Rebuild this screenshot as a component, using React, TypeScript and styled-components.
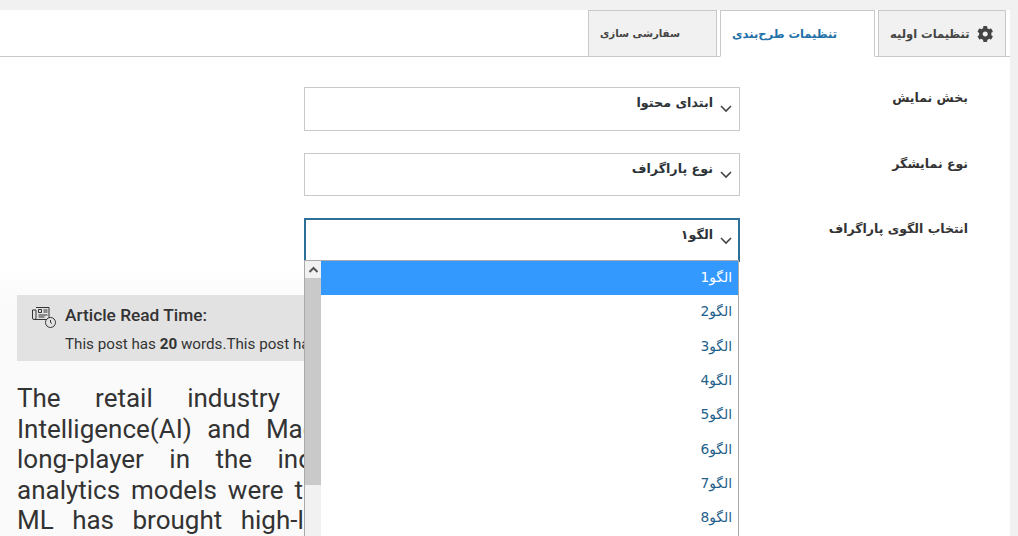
import { createGlobalStyle, styled } from "styled-components";
import { FaCog } from "react-icons/fa";

const GlobalStyle = createGlobalStyle`
  html, body {
    margin: 0;
    height: 536px;
    overflow: hidden;
    background: #f1f1f1;
  }
  * { box-sizing: border-box; }
`;

const Page = styled.div`
  height: 536px;
  padding: 10px 8px 0 0;
  direction: rtl;
  font-family: "DejaVu Sans", "Noto Sans", sans-serif;
  overflow: hidden;
`;
const Panel = styled.div`
  background: #fff;
  height: 526px;
  position: relative;
  overflow: hidden;
`;
const TabBar = styled.div`
  display: flex;
  gap: 3px;
  height: 47px;
  padding-right: 4px;
  border-bottom: 1px solid #c9c9c9;
`;
const Tab = styled.div<{ $active?: boolean; $width: number; $size?: number }>`
  width: ${(p) => p.$width}px;
  height: 47px;
  display: flex;
  align-items: center;
  justify-content: flex-end;
  gap: 7px;
  padding: 0 12px 0 11px;
  border: 1px solid #c9c9c9;
  border-bottom: ${(p) => (p.$active ? "1px solid #fff" : "1px solid #c9c9c9")};
  background: ${(p) => (p.$active ? "#fff" : "#f1f1f1")};
  color: ${(p) => (p.$active ? "#2271a8" : "#444")};
  font-size: ${(p) => p.$size ?? 11.5}px;
  font-weight: 700;
  white-space: nowrap;
`;
const Form = styled.div`
  display: flex;
  flex-direction: column;
  gap: 22px;
  padding: 30px 42px 0 0;
`;
const Row = styled.div`
  display: flex;
`;
const Label = styled.div`
  width: 228px;
  padding-top: 2px;
  color: #333;
  font-size: 12.5px;
  font-weight: 700;
  line-height: 18px;
`;
const Select = styled.div<{ $open?: boolean; $height: number }>`
  width: 436px;
  height: ${(p) => p.$height}px;
  display: flex;
  align-items: flex-start;
  gap: 6px;
  padding: 6px ${(p) => (p.$open ? 5 : 6)}px 0 0;
  border: 1px solid ${(p) => (p.$open ? "#2c7098" : "#c9c9c9")};
  border-width: ${(p) => (p.$open ? "2px 2px 1px" : "1px")};
  color: #2c3338;
  font-size: 12.7px;
  font-weight: 700;
  line-height: 18px;
`;
const Chevron = styled.svg`
  width: 14px;
  height: 14px;
  margin-top: 7px;
  flex: none;
`;
const Preview = styled.div`
  position: absolute;
  left: 0;
  top: 255px;
  width: 660px;
  height: 271px;
  padding: 30px 0 0 17px;
  direction: ltr;
  background: linear-gradient(#fff, #fafafa 40px);
  font-family: Roboto, "Liberation Sans", sans-serif;
  color: #333;
`;
const Notice = styled.div`
  height: 66px;
  background: #e2e2e2;
  padding: 9px 0 0 14px;
  display: flex;
  gap: 7px;
`;
const NoticeBody = styled.div`
  display: flex;
  flex-direction: column;
  gap: 9px;
  white-space: nowrap;
`;
const NoticeTitle = styled.div`
  font-size: 17.3px;
  font-weight: 500;
  line-height: 22px;
`;
const NoticeText = styled.div`
  font-size: 15.2px;
  line-height: 18px;
`;
const Article = styled.div`
  margin-top: 22px;
  font-size: 26px;
  line-height: 30.5px;
`;
const ArticleLine = styled.div<{ $spacing: number }>`
  white-space: nowrap;
  word-spacing: ${(p) => p.$spacing}px;
`;
const Dropdown = styled.div`
  position: absolute;
  left: 304px;
  top: 250px;
  width: 435px;
  height: 276px;
  display: flex;
  direction: ltr;
  background: #fff;
  border-right: 1px solid #a9a9a9;
  border-left: 1px solid #a9a9a9;
  border-top: 1px solid #a9a9a9;
`;
const Scrollbar = styled.div`
  width: 16px;
  height: 100%;
  flex: none;
  background: #f1f1f1;
`;
const ScrollArrow = styled.div`
  height: 17px;
  background: #f1f1f1;
  display: flex;
  align-items: center;
  justify-content: center;
`;
const ScrollThumb = styled.div`
  height: 207px;
  background: #c9c9c9;
`;
const Options = styled.div`
  flex: 1;
  direction: rtl;
`;
const Option = styled.div<{ $selected?: boolean }>`
  height: 34.3px;
  display: flex;
  align-items: center;
  padding: 0 6px 2px 0;
  font-size: 13.8px;
  background: ${(p) => (p.$selected ? "#3399ff" : "#fff")};
  color: ${(p) => (p.$selected ? "#fff" : "#1f5f8b")};
`;

const ArrowDown = () => (
  <Chevron viewBox="0 0 14 14" fill="none" stroke="#444" strokeWidth="1.6">
    <path d="M2 5l5 5 5-5" />
  </Chevron>
);

const ReadIcon = () => (
  <svg width="27" height="26" viewBox="0 0 26 26" fill="none" stroke="#333" strokeWidth="1" style={{ flex: "none", marginTop: 1 }}>
    <path d="M4.500 2.500h13v12h-15a1.500 1.500 0 0 1-1.500-1.500v-8h3.500" />
    <path d="M4.500 5v8a1.500 1.500 0 0 1-1.500 1.500" />
    <path d="M7 4.500h3v3h-3zM12 5h4M12 7h4M7 10h9M7 12h6" />
    <circle cx="19" cy="17.500" r="5" fill="#e2e2e2" />
    <path d="M19 15v2.500l1.500 1" />
  </svg>
);

const lines = [
  { text: "The retail industry has", spacing: 28 },
  { text: "Intelligence(AI) and Machine", spacing: 9 },
  { text: "long-player in the industry", spacing: 19 },
  { text: "analytics models were taken", spacing: 4.5 },
  { text: "ML has brought high-level", spacing: 12 },
];

const patterns = [1, 2, 3, 4, 5, 6, 7, 8];

function App() {
  return (
    <>
      <GlobalStyle />
      <Page>
        <Panel>
          <TabBar>
            <Tab $width={128}>
              <FaCog size={20} color="#444" />
              <span>تنظیمات اولیه</span>
            </Tab>
            <Tab $width={155} $active>
              تنظیمات طرح‌بندی
            </Tab>
            <Tab $width={129} $size={10.2}>
              سفارشی سازی
            </Tab>
          </TabBar>
          <Form>
            <Row>
              <Label>بخش نمایش</Label>
              <Select $height={44}>
                <ArrowDown />
                <span>ابتدای محتوا</span>
              </Select>
            </Row>
            <Row>
              <Label>نوع نمایشگر</Label>
              <Select $height={43}>
                <ArrowDown />
                <span>نوع پاراگراف</span>
              </Select>
            </Row>
            <Row>
              <Label>انتخاب الگوی پاراگراف</Label>
              <Select $height={44} $open>
                <ArrowDown />
                <span>الگو۱</span>
              </Select>
            </Row>
          </Form>
          <Preview>
            <Notice>
              <ReadIcon />
              <NoticeBody>
                <NoticeTitle>Article Read Time:</NoticeTitle>
                <NoticeText>
                  This post has <b>20</b> words.This post has
                </NoticeText>
              </NoticeBody>
            </Notice>
            <Article>
              {lines.map((line) => (
                <ArticleLine key={line.text} $spacing={line.spacing}>
                  {line.text}
                </ArticleLine>
              ))}
            </Article>
          </Preview>
          <Dropdown>
            <Scrollbar>
              <ScrollArrow>
                <svg width="11" height="8" viewBox="0 0 11 8" fill="none" stroke="#555" strokeWidth="2">
                  <path d="M1.500 6l4-4 4 4" />
                </svg>
              </ScrollArrow>
              <ScrollThumb />
            </Scrollbar>
            <Options>
              {patterns.map((n) => (
                <Option key={n} $selected={n === 1}>
                  {"الگو" + n}
                </Option>
              ))}
            </Options>
          </Dropdown>
        </Panel>
      </Page>
    </>
  );
}

export default App;
